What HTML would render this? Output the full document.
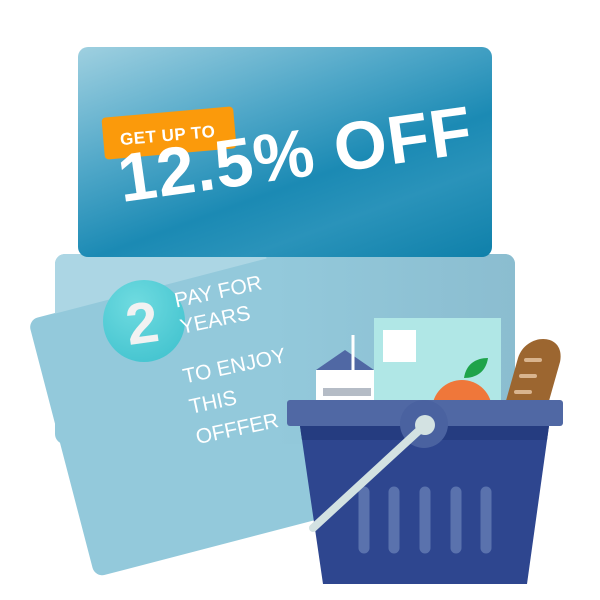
<!DOCTYPE html>
<html><head><style>
body{margin:0;width:600px;height:600px;background:#fff;position:relative;overflow:hidden;font-family:"Liberation Sans",sans-serif}
.a{position:absolute}
</style></head><body>
<div class="a" style="left:28px;top:320px;width:300px;height:266px;border-radius:10px;background:#93c9db;transform:rotate(-14.6deg);transform-origin:0 0"></div>
<div class="a" style="left:55px;top:254px;width:460px;height:190px;border-radius:10px;background:#93c9db;overflow:hidden">
  <div class="a" style="left:-40px;top:-60px;width:260px;height:130px;background:#acd6e4;transform:rotate(-14.6deg);transform-origin:0 100%"></div>
  <div class="a" style="left:220px;top:0;width:240px;height:190px;background:linear-gradient(90deg,rgba(140,190,208,0),#8bbdd0)"></div>
</div>
<div class="a" style="left:78px;top:47px;width:414px;height:210px;border-radius:10px;background:linear-gradient(160deg,#9fd0e0 0%,#4fa7c8 35%,#1b8ab4 60%,#2a93ba 75%,#0f80aa 100%)"></div>
<div class="a" style="left:103px;top:112px;width:132px;height:42px;background:#fb9a0b;border-radius:4px;transform:rotate(-5deg)"></div>
<div class="a" style="left:120px;top:126px;color:#fff;font-weight:bold;font-size:17px;transform:rotate(-5deg);letter-spacing:0.5px">GET UP TO</div>
<div class="a" style="left:124px;top:140px;color:#fff;font-weight:bold;font-size:68px;transform:rotate(-8deg);transform-origin:left bottom;white-space:nowrap;letter-spacing:1px">12.5% OFF</div>
<div class="a" style="left:103px;top:280px;width:82px;height:82px;border-radius:50%;background:radial-gradient(circle at 40% 30%,#6fdbe0,#3bbfcc)"></div>
<div class="a" style="left:126px;top:290px;color:#f2f2f2;font-weight:bold;font-size:58px;transform:rotate(-8deg)">2</div>
<div class="a" style="left:172px;top:288px;color:#fff;font-size:21px;line-height:27px;transform:rotate(-12deg);transform-origin:0 0">PAY FOR<br>YEARS</div>
<div class="a" style="left:180px;top:362px;color:#fff;font-size:21px;line-height:31px;transform:rotate(-12deg);transform-origin:0 0">TO ENJOY<br>THIS<br>OFFFER</div>
<svg class="a" style="left:0;top:0" width="600" height="600">
<rect x="316" y="370" width="58" height="45" fill="#fff"/>
<polygon points="316,370 345,350 374,370" fill="#5068a4"/>
<line x1="353" y1="335" x2="353" y2="380" stroke="#fff" stroke-width="3"/>
<rect x="323" y="388" width="48" height="8" fill="#b5bcc6"/>
<rect x="374" y="318" width="127" height="100" fill="#b0e7e6"/>
<rect x="383" y="330" width="33" height="32" fill="#fff"/>
<path d="M464 378 C466 364 476 358 488 358 C486 372 476 378 464 378Z" fill="#1ea34a"/>
<circle cx="462" cy="410" r="30" fill="#ef773a"/>
<path d="M502 415 L518 358 C526 332 566 332 560 362 L545 415Z" fill="#9c6630"/>
<path d="M526 360 h14 M521 376 h14 M516 392 h14" stroke="#d9b48e" stroke-width="4" stroke-linecap="round"/>
<rect x="287" y="400" width="276" height="26" rx="3" fill="#5068a4"/>
<polygon points="300,426 549,426 527,584 323,584" fill="#2e468f"/>
<polygon points="300,426 549,426 547,440 302,440" fill="#253c80"/>
<g stroke="#5a72ad" stroke-width="11" stroke-linecap="round">
<line x1="364" y1="492" x2="364" y2="548"/><line x1="394" y1="492" x2="394" y2="548"/><line x1="425" y1="492" x2="425" y2="548"/><line x1="456" y1="492" x2="456" y2="548"/><line x1="486" y1="492" x2="486" y2="548"/>
</g>
<circle cx="424" cy="424" r="24" fill="#4a62a0"/>
<line x1="425" y1="425" x2="313" y2="528" stroke="#d3e2e2" stroke-width="8" stroke-linecap="round"/>
<circle cx="425" cy="425" r="10" fill="#d3e2e2"/>
</svg>
</body></html>
